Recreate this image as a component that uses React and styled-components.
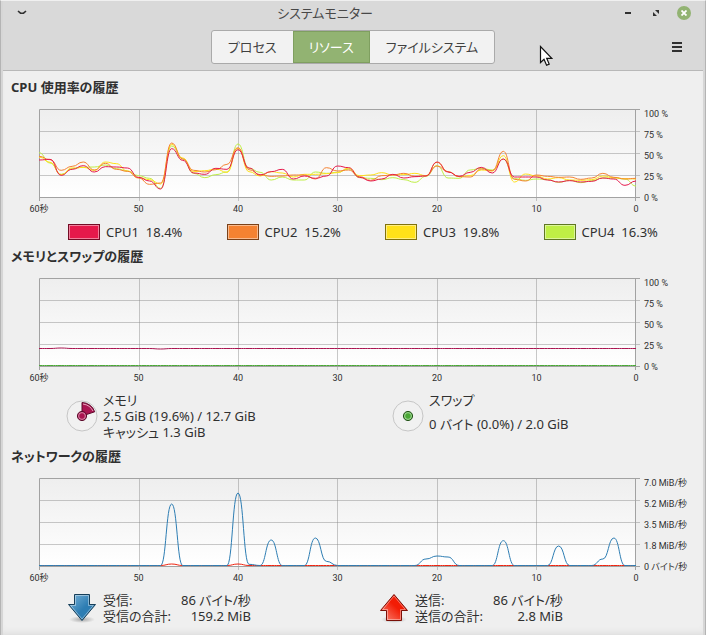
import React from "react";
import styled, { createGlobalStyle } from "styled-components";

const GlobalStyle = createGlobalStyle`
  * { box-sizing: border-box; }
  body {
    margin: 0;
    background: #efefef;
    color: #303030;
    font-family: "Noto Sans", "Noto Sans CJK JP", sans-serif;
    font-size: 13px;
    line-height: 16px;
    font-feature-settings: "palt";
  }
`;

const Window = styled.div`
  position: relative;
  display: flex;
  flex-direction: column;
  min-height: 100vh;
  padding: 0 2px 2px;
  border: 1px solid #b4b4b4;
  border-top-color: #f0f0f0;
  background: #d6d6d6;
`;

const Header = styled.header`
  background: #d9d9d9;
  border-bottom: 1px solid #b8b8b8;
`;

const TitleBar = styled.div`
  display: grid;
  grid-template-columns: auto 1fr auto;
  align-items: center;
  height: 23px;
  padding: 0 12px;
`;

const Title = styled.h1`
  margin: 0;
  font-size: 13px;
  font-weight: 400;
  text-align: center;
  color: #484848;
`;

const WindowButtons = styled.div`
  display: flex;
  justify-content: flex-end;
  gap: 14px;
`;

const IconButton = styled.button`
  display: flex;
  align-items: center;
  justify-content: center;
  width: 14px;
  height: 14px;
  padding: 0;
  border: 0;
  border-radius: 7px;
  background: ${(p) => (p.$accent ? "#92b372" : "none")};
  color: #303030;
`;

const Toolbar = styled.div`
  display: grid;
  grid-template-columns: 1fr auto 1fr;
  align-items: center;
  justify-items: end;
  height: 46px;
  padding: 0 19px;
`;

const Tabs = styled.nav`
  grid-column: 2;
  display: flex;
  border: 1px solid #aaa;
  border-radius: 3px;
  background: #f2f2f2;
  overflow: hidden;
`;

const Tab = styled.button`
  height: 32px;
  padding: 0 16px;
  border: 0;
  background: none;
  color: #404040;
  font: inherit;

  &[aria-pressed="true"] {
    background: #92b372;
    color: #fff;
    box-shadow: inset 0 0 0 1px #7f9f60;
  }
`;

const Main = styled.main`
  flex: 1;
  padding: 6px 0 8px;
  background: #efefef;
  box-shadow: inset 0 -9px 8px -6px #d4d4d4;
`;

const Heading = styled.h2`
  margin: 0 8px 12px;
  font-size: 13px;
  line-height: 20px;
  font-weight: 700;
`;

const ChartGrid = styled.div`
  display: grid;
  grid-template-columns: 1fr 63px;
  margin-left: 36px;
`;

const Plot = styled.svg`
  display: block;
  width: 100%;
  height: 92px;
`;

const YLabels = styled.div`
  display: flex;
  flex-direction: column;
  justify-content: space-between;
  height: 100px;
  padding-left: 4px;
  margin: -3px 0 -5px;
  font-family: Roboto, "Noto Sans CJK JP", sans-serif;
  font-size: 9px;
  white-space: nowrap;
`;

const XLabels = styled.div`
  display: flex;
  justify-content: space-between;
  height: 14px;
  margin-right: 4px;
  font-family: Roboto, "Noto Sans CJK JP", sans-serif;
  font-size: 9px;
  line-height: 16px;
  white-space: nowrap;

  span {
    display: flex;
    justify-content: center;
    width: 0;
  }
`;

const Legend = styled.div`
  display: grid;
  grid-template-columns: repeat(4, 1fr);
  margin: 8px 1px 6px 65px;
`;

const LegendItem = styled.div`
  display: flex;
  align-items: center;
  gap: 6px;
  height: 17px;
  white-space: pre;
`;

const Swatch = styled.button`
  width: 32px;
  height: 16px;
  padding: 0;
  border: 1px solid ${(p) => p.$edge};
  background: ${(p) => p.$fill};
  box-shadow: inset 0 0 0 1px rgba(255, 255, 255, 0.45);
`;

const Info = styled.div`
  display: grid;
  grid-template-columns: ${(p) => p.$columns};
  margin: 8px 0 6px 63px;
`;

const InfoItem = styled.div`
  display: flex;
  align-items: center;
  gap: 5px;
`;

const Lines = styled.div`
  display: flex;
  flex-direction: column;
  align-self: ${(p) => (p.$spread ? "flex-start" : "center")};
  gap: ${(p) => (p.$spread ? "8px" : "0")};
`;

const Rates = styled.dl`
  display: grid;
  grid-template-columns: 78px auto;
  margin: 0;

  dd {
    margin: 0;
    text-align: right;
  }
`;

const Pointer = styled.svg`
  position: absolute;
  left: 538px;
  top: 44px;
  pointer-events: none;
`;

const WIDTH = 597;
const HEIGHT = 88;

// every sample is its distance from the top of the plot, in thirds of a pixel
const cpus = [
  {
    name: "CPU1", value: "18.4%", color: "#e6194b", edge: "#730c25",
    data: [153, 151, 199, 181, 170, 189, 173, 174, 177, 205, 216, 240, 119, 154, 192, 196, 178, 181, 122, 177, 198, 188, 181, 210, 201, 208, 201, 171, 176, 205, 216, 210, 196, 207, 203, 201, 159, 189, 202, 190, 175, 192, 150, 204, 204, 204, 213, 219, 215, 219, 217, 207, 210, 229, 216],
  },
  {
    name: "CPU2", value: "15.2%", color: "#f58231", edge: "#7a4118",
    data: [142, 152, 184, 172, 159, 183, 163, 181, 187, 207, 226, 222, 102, 150, 184, 189, 182, 166, 116, 182, 197, 202, 201, 198, 198, 210, 176, 186, 183, 203, 214, 200, 198, 193, 202, 200, 171, 188, 203, 204, 180, 185, 127, 211, 216, 198, 202, 205, 204, 211, 207, 193, 205, 210, 208],
  },
  {
    name: "CPU3", value: "19.8%", color: "#ffe119", edge: "#80710c",
    data: [144, 160, 197, 177, 175, 184, 159, 164, 186, 206, 212, 225, 106, 147, 188, 185, 180, 190, 118, 188, 201, 188, 192, 204, 196, 196, 194, 191, 177, 200, 198, 191, 198, 197, 193, 200, 160, 188, 203, 200, 183, 186, 140, 219, 195, 201, 210, 206, 213, 214, 212, 201, 206, 209, 210],
  },
  {
    name: "CPU4", value: "16.3%", color: "#bfef45", edge: "#5f7722",
    data: [131, 162, 196, 179, 175, 174, 168, 179, 186, 200, 208, 238, 111, 150, 193, 206, 197, 189, 105, 178, 190, 213, 204, 213, 213, 189, 193, 190, 180, 206, 208, 212, 206, 212, 220, 202, 170, 207, 208, 183, 178, 183, 150, 209, 214, 210, 212, 220, 214, 221, 215, 207, 207, 210, 231],
  },
];

const flat = (value, peaks = {}) =>
  Array.from({ length: 55 }, (_, i) => peaks[i] ?? value);

const memory = [
  { color: "#aa1450", data: flat(211.5, { 2: 210, 11: 213 }) },
  { color: "#49a835", data: flat(262.5) },
];

const network = [
  { color: "#ef2410", data: flat(262.5, { 12: 258, 18: 258 }) },
  {
    color: "#2d7db3",
    data: flat(262.5, { 12: 78, 18: 45, 19: 259, 21: 186, 25: 180, 26: 250, 35: 243, 36: 234, 37: 237, 42: 188, 47: 204, 51: 243, 52: 180 }),
  },
];

const percents = ["100 %", "75 %", "50 %", "25 %", "0 %"];
const speeds = ["7.0 MiB/秒", "5.2 MiB/秒", "3.5 MiB/秒", "1.8 MiB/秒", "0 バイト/秒"];
const seconds = ["60秒", "50", "40", "30", "20", "10", "0"];

function linePath(data) {
  const step = WIDTH / (data.length - 1);
  return data.reduce((path, value, i) => {
    const y = value / 3;
    if (i === 0) return `M0 ${y}`;
    const x = i * step;
    const mid = x - step / 2;
    return `${path} C${mid} ${data[i - 1] / 3} ${mid} ${y} ${x} ${y}`;
  }, "");
}

function Chart({ id, label, series, yLabels }) {
  return (
    <ChartGrid>
      <Plot viewBox="0 0 601 92" preserveAspectRatio="none" role="img" aria-label={label}>
        <defs>
          <linearGradient id={id} x1="0" y1="0" x2="0" y2="1">
            <stop offset="0" stopColor="#eeeeee" />
            <stop offset="1" stopColor="#ffffff" />
          </linearGradient>
        </defs>
        <rect width={WIDTH} height={HEIGHT} fill={`url(#${id})`} />
        <path d="M0 22.5H601M0 44.5H601M0 66.5H601M100.5 0V92M199.5 0V92M298.5 0V92M398.5 0V92M497.5 0V92" stroke="#888" strokeOpacity="0.45" />
        <path d="M0.5 92V0.5H601M596.5 0V92M0 88.5H601" fill="none" stroke="#a2a2a2" />
        {series.map((s) => (
          <path key={s.color} d={linePath(s.data)} fill="none" stroke={s.color} strokeWidth="1" />
        ))}
      </Plot>
      <YLabels>
        {yLabels.map((t) => <span key={t}>{t}</span>)}
      </YLabels>
      <XLabels>
        {seconds.map((t) => <span key={t}>{t}</span>)}
      </XLabels>
    </ChartGrid>
  );
}

function Pie({ color, edge, slice }) {
  return (
    <svg width="32" height="32" viewBox="0 0 32 32">
      <circle cx="16" cy="16" r="15" fill="#f1f1f1" stroke="#c6c6c6" />
      {slice && <path d="M16 16V2.5A13.5 13.5 0 0 1 28.7 11.8Z" fill={color} stroke={edge} />}
      {slice && <path d="M17 4Q24 5 27 11" fill="none" stroke="#e3a5bd" />}
      <circle cx="16" cy="16" r="4.6" fill={color} stroke={edge} />
      <circle cx="16" cy="16" r="3.4" fill="none" stroke="#fff" strokeOpacity="0.5" />
    </svg>
  );
}

function Arrow({ id, up, from, to, edge }) {
  return (
    <svg width="32" height="32" viewBox="0 0 32 32">
      <defs>
        <linearGradient id={id} x1="0" y1="0" x2="1" y2="1">
          <stop offset="0" stopColor={from} />
          <stop offset="0.55" stopColor={to} />
          <stop offset="1" stopColor={to} />
        </linearGradient>
        <radialGradient id={`${id}-shade`}>
          <stop offset="0" stopColor="#000" stopOpacity="0.3" />
          <stop offset="1" stopColor="#000" stopOpacity="0" />
        </radialGradient>
      </defs>
      <ellipse cx="16" cy="27.5" rx="13" ry="3.5" fill={`url(#${id}-shade)`} />
      <g transform={up ? "matrix(1 0 0 -1 0 31)" : undefined}>
        <path d="M8.5 2.5H23.5V12.5H29.5L16 28.5L2.5 12.5H8.5Z" fill={`url(#${id})`} stroke={edge} />
        <path d="M9.5 3.5H22.5V13.5H27.3L16 27L4.7 13.5H9.5Z" fill="none" stroke="#fff" strokeOpacity="0.4" />
      </g>
    </svg>
  );
}

function App() {
  return (
    <>
      <GlobalStyle />
      <Window>
        <Header>
          <TitleBar>
            <IconButton aria-label="メニュー">
              <svg width="10" height="6" viewBox="0 0 10 6">
                <path d="M1 1L3.5 3.2H6.5L9 1" fill="none" stroke="currentColor" strokeWidth="1.6" />
              </svg>
            </IconButton>
            <Title>システムモニター</Title>
            <WindowButtons>
              <IconButton aria-label="最小化">
                <svg width="6" height="2"><rect width="6" height="2" fill="currentColor" /></svg>
              </IconButton>
              <IconButton aria-label="最大化">
                <svg width="6" height="6" viewBox="0 0 6 6">
                  <path d="M2 0H6V4ZM0 2V6H4Z" fill="currentColor" />
                </svg>
              </IconButton>
              <IconButton $accent aria-label="閉じる">
                <svg width="6" height="6" viewBox="0 0 6 6">
                  <path d="M0.5 0.5L5.5 5.5M5.5 0.5L0.5 5.5" stroke="#fff" strokeWidth="1.8" />
                </svg>
              </IconButton>
            </WindowButtons>
          </TitleBar>
          <Toolbar>
            <Tabs>
              <Tab aria-pressed="false">プロセス</Tab>
              <Tab aria-pressed="true">リソース</Tab>
              <Tab aria-pressed="false">ファイルシステム</Tab>
            </Tabs>
            <IconButton aria-label="設定">
              <svg width="10" height="10" viewBox="0 0 10 10">
                <path d="M0 1H10M0 5H10M0 9H10" stroke="currentColor" strokeWidth="2" />
              </svg>
            </IconButton>
          </Toolbar>
        </Header>
        <Main>
          <section>
            <Heading>CPU 使用率の履歴</Heading>
            <Chart id="cpu" label="CPU 使用率" series={[...cpus].reverse()} yLabels={percents} />
            <Legend>
              {cpus.map((cpu) => (
                <LegendItem key={cpu.name}>
                  <Swatch $fill={cpu.color} $edge={cpu.edge} aria-label={cpu.name} />
                  <span>{cpu.name}{"  "}{cpu.value}</span>
                </LegendItem>
              ))}
            </Legend>
          </section>
          <section>
            <Heading>メモリとスワップの履歴</Heading>
            <Chart id="memory" label="メモリとスワップ" series={memory} yLabels={percents} />
            <Info $columns="326fr 311fr">
              <InfoItem>
                <Pie color="#aa1450" edge="#5c0b2b" slice />
                <Lines>
                  <span>メモリ</span>
                  <span>2.5 GiB (19.6%) / 12.7 GiB</span>
                  <span>キャッシュ 1.3 GiB</span>
                </Lines>
              </InfoItem>
              <InfoItem>
                <Pie color="#49a835" edge="#25541b" />
                <Lines $spread>
                  <span>スワップ</span>
                  <span>0 バイト (0.0%) / 2.0 GiB</span>
                </Lines>
              </InfoItem>
            </Info>
          </section>
          <section>
            <Heading>ネットワークの履歴</Heading>
            <Chart id="network" label="ネットワーク" series={network} yLabels={speeds} />
            <Info $columns="312fr 325fr">
              <InfoItem>
                <Arrow id="down" from="#7db4d8" to="#2d7db3" edge="#163e59" />
                <Rates>
                  <dt>受信:</dt><dd>86 バイト/秒</dd>
                  <dt>受信の合計:</dt><dd>159.2 MiB</dd>
                </Rates>
              </InfoItem>
              <InfoItem>
                <Arrow id="up" up from="#f98b7c" to="#f21c05" edge="#7a1008" />
                <Rates>
                  <dt>送信:</dt><dd>86 バイト/秒</dd>
                  <dt>送信の合計:</dt><dd>2.8 MiB</dd>
                </Rates>
              </InfoItem>
            </Info>
          </section>
        </Main>
        <Pointer width="14" height="22" viewBox="0 0 14 22">
          <path d="M1.5 1.5V17.5L5 14.2L7.6 20.3L10.2 19.1L7.7 13.3H12.8Z" fill="#fff" stroke="#111" strokeWidth="1.2" />
        </Pointer>
      </Window>
    </>
  );
}

export default App;
